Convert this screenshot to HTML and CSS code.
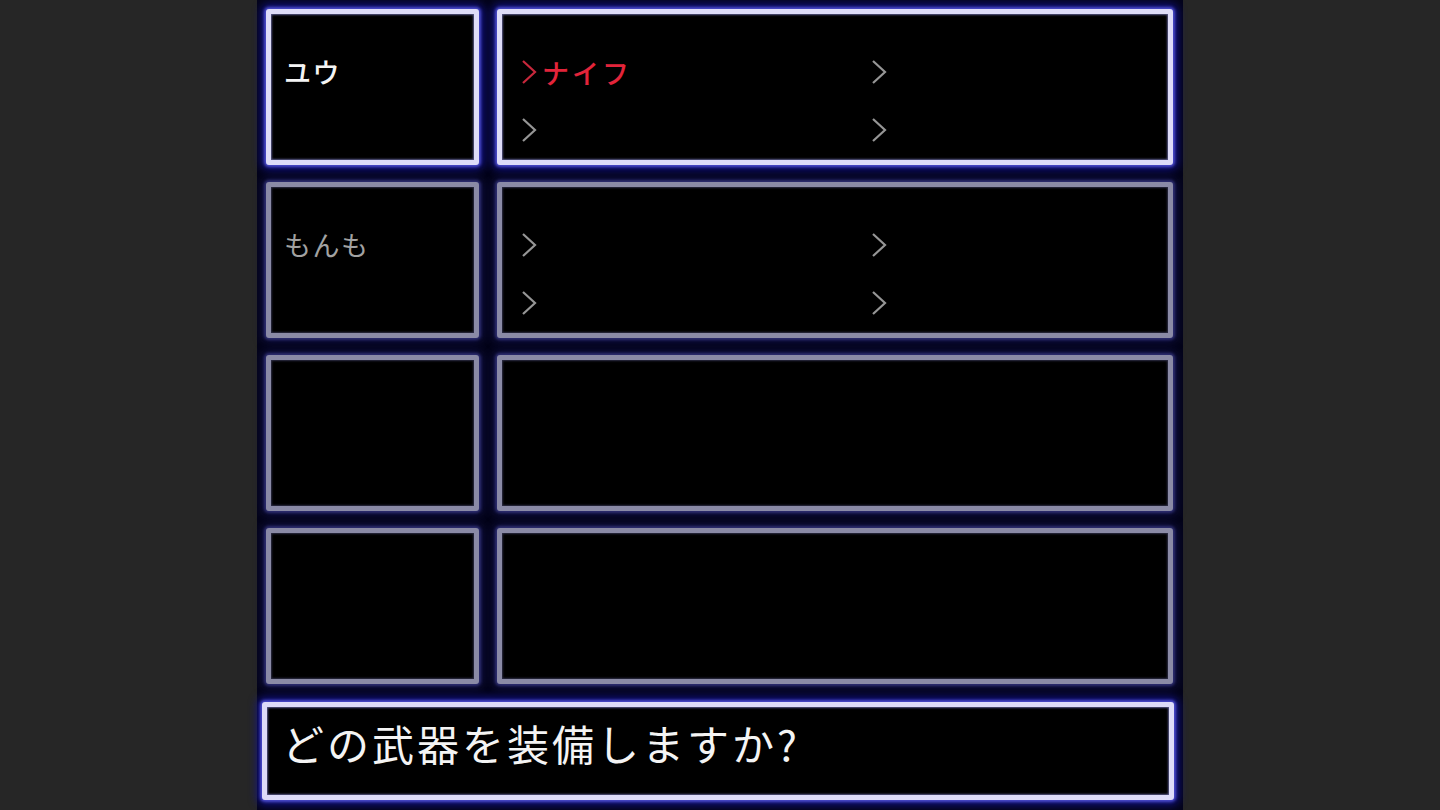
FILE: index.html
```html
<!DOCTYPE html>
<html lang="ja">
<head>
<meta charset="utf-8">
<title>装備</title>
<link rel="stylesheet" href="styles.css">
</head>
<body>
<div class="screen">
  <div class="row">
    <div class="box active name-box"><span class="name">ユウ</span></div>
    <div class="box active items">
      <div class="slot sel"><svg class="chev" viewBox="0 0 16 26"><polyline points="2,2 14,13 2,24"/></svg><span>ナイフ</span></div>
      <div class="slot"><svg class="chev" viewBox="0 0 16 26"><polyline points="2,2 14,13 2,24"/></svg></div>
      <div class="slot"><svg class="chev" viewBox="0 0 16 26"><polyline points="2,2 14,13 2,24"/></svg></div>
      <div class="slot"><svg class="chev" viewBox="0 0 16 26"><polyline points="2,2 14,13 2,24"/></svg></div>
    </div>
  </div>
  <div class="row">
    <div class="box name-box"><span class="name dim">もんも</span></div>
    <div class="box items">
      <div class="slot"><svg class="chev" viewBox="0 0 16 26"><polyline points="2,2 14,13 2,24"/></svg></div>
      <div class="slot"><svg class="chev" viewBox="0 0 16 26"><polyline points="2,2 14,13 2,24"/></svg></div>
      <div class="slot"><svg class="chev" viewBox="0 0 16 26"><polyline points="2,2 14,13 2,24"/></svg></div>
      <div class="slot"><svg class="chev" viewBox="0 0 16 26"><polyline points="2,2 14,13 2,24"/></svg></div>
    </div>
  </div>
  <div class="row">
    <div class="box name-box"></div>
    <div class="box items"></div>
  </div>
  <div class="row">
    <div class="box name-box"></div>
    <div class="box items"></div>
  </div>
  <div class="box active message">どの武器を装備しますか?</div>
</div>
</body>
</html>
```

FILE: styles.css
```css
html, body {
  margin: 0;
  padding: 0;
  background: #262626;
  height: 100%;
  overflow: hidden;
}

.screen {
  box-sizing: border-box;
  width: 926px;
  height: 810px;
  margin: 0 auto;
  background: #04041a;
  display: flex;
  flex-direction: column;
  gap: 17px;
  padding: 9px 10px 0 9px;
  font-family: "Noto Sans CJK JP", "Noto Sans", sans-serif;
}

.row {
  display: grid;
  grid-template-columns: 213px 676px;
  gap: 18px;
  height: 156px;
}

.box {
  box-sizing: border-box;
  background: #000;
  border: 5px solid #8a8aa6;
  border-radius: 3px;
  box-shadow: 0 0 3px 2px rgba(50, 50, 120, 0.9), 0 0 8px 4px rgba(20, 20, 80, 0.7), inset 0 0 2px 1px rgba(90, 90, 140, 0.5);
}

.box.active {
  border-color: #dedcf8;
  box-shadow: 0 0 3px 2px rgba(80, 80, 210, 0.95), 0 0 9px 5px rgba(20, 20, 150, 0.8), inset 0 0 2px 1px rgba(150, 150, 230, 0.6);
}

.name-box {
  padding: 29px 0 0 13px;
}

.name {
  display: block;
  font-size: 27px;
  font-weight: 500;
  line-height: 58px;
  color: #f4f4f4;
  letter-spacing: 1.5px;
}

.name.dim {
  color: #a2a2a2;
  font-weight: 400;
}

.items {
  display: grid;
  grid-template-columns: 350px 1fr;
  grid-auto-rows: 58px;
  padding: 29px 0 0 19px;
}

.slot {
  display: flex;
  align-items: center;
  gap: 5px;
  font-size: 27px;
  font-weight: 500;
  color: #a8a8a8;
  letter-spacing: 3px;
}

.chev {
  width: 16px;
  height: 26px;
  fill: none;
  stroke: #969696;
  stroke-width: 2.2;
}

.slot.sel {
  color: #e2243a;
}

.slot.sel .chev {
  stroke: #c8283c;
}

.message {
  height: 98px;
  width: 912px;
  margin: 1px 0 0 -4px;
  padding: 9px 0 0 15px;
  font-size: 42px;
  line-height: 54px;
  color: #f4f4f4;
  letter-spacing: 3px;
}
```
